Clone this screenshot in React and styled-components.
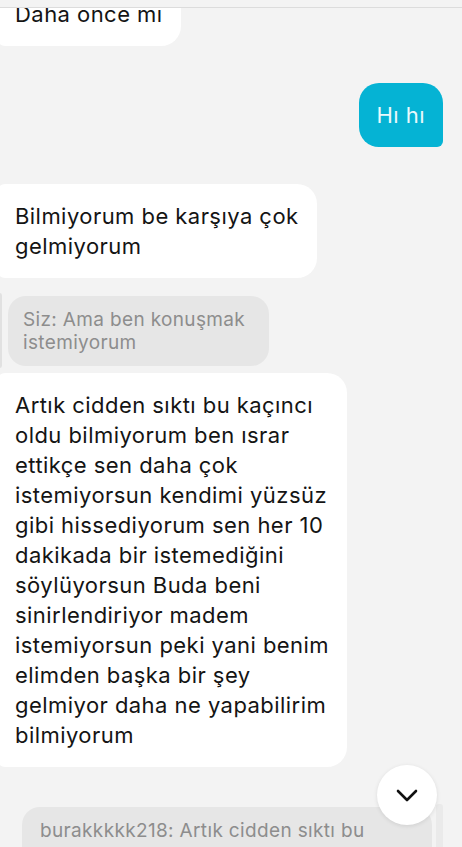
import styled, { createGlobalStyle } from "styled-components";

const GlobalStyle = createGlobalStyle`
  html, body {
    margin: 0;
    padding: 0;
    background: #f3f3f3;
  }
  body {
    font-family: Inter, "Liberation Sans", sans-serif;
    -webkit-font-smoothing: antialiased;
  }
`;

const Screen = styled.div`
  position: relative;
  width: 462px;
  height: 847px;
  overflow: hidden;
  background: #f3f3f3;
  display: flex;
  flex-direction: column;
`;

const TopEdge = styled.div`
  flex: none;
  height: 7px;
  background: #f3f3f3;
  border-bottom: 1px solid #dcdcdc;
`;

const Thread = styled.div`
  flex: 1;
  overflow: hidden;
`;

const List = styled.div`
  display: flex;
  flex-direction: column;
  margin-top: -26px;
`;

const Row = styled.div`
  display: flex;
  justify-content: ${(p) => (p.$mine ? "flex-end" : "flex-start")};
  margin-top: ${(p) => p.$top || 0}px;
`;

const Bubble = styled.div`
  font-size: 22px;
  letter-spacing: 0.45px;
  line-height: 30px;
  padding: 17px 18px;
  background: ${(p) => (p.$mine ? "#05b3d4" : "#ffffff")};
  color: ${(p) => (p.$mine ? "#eaf9fc" : "#141414")};
  border-radius: ${(p) => (p.$mine ? "20px 20px 6px 20px" : "8px 20px 20px 8px")};
  margin: ${(p) => (p.$mine ? "0 19px 0 0" : "0 0 0 -3px")};
`;

const Line = styled.span`
  display: block;
  white-space: nowrap;
`;

const QuoteRow = styled.div`
  display: flex;
  gap: ${(p) => (p.$mine ? 4 : 6)}px;
  margin-top: ${(p) => p.$top || 0}px;
  padding: ${(p) => (p.$mine ? "0 19px 0 22px" : "0 0 0 -3px")};
  flex-direction: ${(p) => (p.$mine ? "row-reverse" : "row")};
`;

const ReplyBar = styled.div`
  flex: none;
  width: ${(p) => (p.$mine ? 7 : 5)}px;
  border-radius: 3px;
  background: ${(p) => (p.$mine ? "#eaeaea" : "#e1e1e1")};
  margin-left: ${(p) => (p.$mine ? 0 : -3)}px;
`;

const Quote = styled.div`
  flex: ${(p) => (p.$wide ? 1 : "none")};
  margin: 3px 0 2px;
  padding: 12px 24px ${(p) => (p.$wide ? 40 : 12)}px ${(p) => (p.$wide ? 18 : 15)}px;
  border-radius: 18px;
  background: #e6e6e6;
  color: #8d8d8d;
  font-size: 19px;
  letter-spacing: 0.35px;
  line-height: 23px;
`;

const ScrollButton = styled.button`
  position: absolute;
  right: 25px;
  bottom: 22px;
  width: 60px;
  height: 60px;
  border: none;
  border-radius: 50%;
  background: #ffffff;
  box-shadow: 0 1px 4px rgba(0, 0, 0, 0.1);
  display: flex;
  align-items: center;
  justify-content: center;
  padding: 0;
`;

function Text({ lines }) {
  return lines.map((l) => <Line key={l}>{l}</Line>);
}

const longMessage = [
  "Artık cidden sıktı bu kaçıncı",
  "oldu bilmiyorum ben ısrar",
  "ettikçe sen daha çok",
  "istemiyorsun kendimi yüzsüz",
  "gibi hissediyorum sen her 10",
  "dakikada bir istemediğini",
  "söylüyorsun Buda beni",
  "sinirlendiriyor madem",
  "istemiyorsun peki yani benim",
  "elimden başka bir şey",
  "gelmiyor daha ne yapabilirim",
  "bilmiyorum",
];

export default function App() {
  return (
    <>
      <GlobalStyle />
      <Screen>
        <TopEdge />
        <Thread>
          <List>
            <Row>
              <Bubble>
                <Text lines={["Daha önce mi"]} />
              </Bubble>
            </Row>
            <Row $mine $top={37}>
              <Bubble $mine>
                <Text lines={["Hı hı"]} />
              </Bubble>
            </Row>
            <Row $top={37}>
              <Bubble>
                <Text lines={["Bilmiyorum be karşıya çok", "gelmiyorum"]} />
              </Bubble>
            </Row>
            <QuoteRow $top={15}>
              <ReplyBar />
              <Quote>
                <Text lines={["Siz: Ama ben konuşmak", "istemiyorum"]} />
              </Quote>
            </QuoteRow>
            <Row $top={5}>
              <Bubble>
                <Text lines={longMessage} />
              </Bubble>
            </Row>
            <QuoteRow $mine $top={37}>
              <ReplyBar $mine />
              <Quote $wide>
                <Text lines={["burakkkkk218: Artık cidden sıktı bu"]} />
              </Quote>
            </QuoteRow>
          </List>
        </Thread>
        <ScrollButton aria-label="Aşağı kaydır">
          <svg width="22" height="13" viewBox="0 0 22 13" fill="none">
            <polyline
              points="2,2 11,11 20,2"
              stroke="#111"
              strokeWidth="2.6"
              strokeLinecap="round"
              strokeLinejoin="round"
            />
          </svg>
        </ScrollButton>
      </Screen>
    </>
  );
}
